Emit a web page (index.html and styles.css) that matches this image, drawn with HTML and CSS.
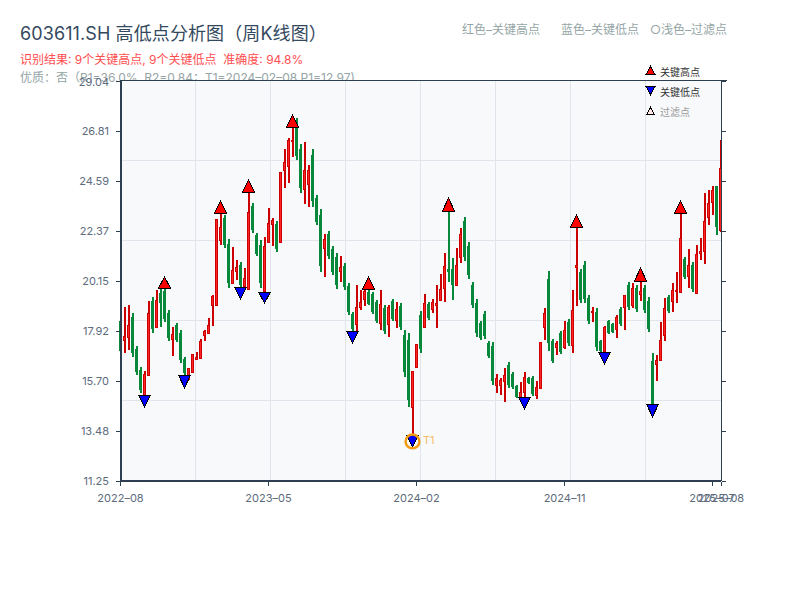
FILE: index.html
```html
<!DOCTYPE html>
<html lang="en">

<head>
    <meta charset="UTF-8">

    <title>603611.SH 高低点分析图</title>
    <link rel="stylesheet" href="styles.css">
</head>

<body>

    <div class="page">
        <div class="header">
            <div class="header-left">
                <h1 class="title">603611.SH 高低点分析图（周K线图）</h1>
                <div class="result">识别结果: 9个关键高点, 9个关键低点&nbsp;&nbsp;准确度: 94.8%</div>
                <div class="quality">优质：否（R1=36.0%, R2=0.84；T1=2024–02–08 P1=12.97)</div>
            </div>
            <div class="header-key">
                <span class="key-first">红色–关键高点</span>
                <span class="key-second">蓝色–关键低点</span>
                <span>○浅色–过滤点</span>
            </div>
        </div>

        <svg class="chart" width="800" height="540" viewBox="0 60 800 540">
            <rect class="plot" x="121" y="81" width="600" height="400"></rect>
            <g id="grid"></g>
            <g id="candles"></g>
            <g id="markers"></g>
            <circle class="t1-ring" cx="412.5" cy="441.4" r="6.9"></circle>
            <text class="t1-label" x="423" y="444">T1</text>
            <g id="axes"></g>

            <g class="y-labels">
                <text x="109" y="86">29.04</text>
                <text x="109" y="135">26.81</text>
                <text x="109" y="185">24.59</text>
                <text x="109" y="235">22.37</text>
                <text x="109" y="285">20.15</text>
                <text x="109" y="335">17.92</text>
                <text x="109" y="385">15.70</text>
                <text x="109" y="435">13.48</text>
                <text x="109" y="485">11.25</text>
            </g>
            <g class="x-labels">
                <text x="120.5" y="502">2022–08</text>
                <text x="268.5" y="502">2023–05</text>
                <text x="416.5" y="502">2024–02</text>
                <text x="564.5" y="502">2024–11</text>
                <text x="712" y="502">2025–07</text>
                <text x="721" y="502">2025–08</text>
            </g>
            <g class="legend">
                <polygon class="up" points="650.5,66.5 655,74.5 646,74.5"></polygon>
                <text x="660" y="76">关键高点</text>
                <polygon class="down" points="650.5,94.5 655,86.5 646,86.5"></polygon>
                <text x="660" y="96">关键低点</text>
                <polygon class="faint" points="650.5,107.5 654,114 647,114"></polygon>
                <text class="legend-muted" x="660" y="116">过滤点</text>
            </g>
        </svg>
    </div>

    <script src="chart.js"></script>

</body>

</html>
```

FILE: styles.css
```css
* {
    margin: 0;
    padding: 0;
}

body {
    background: #fff;
    font-family: Inter, "Noto Sans CJK SC", sans-serif;
}

.page {
    width: 800px;
    height: 600px;
    overflow: hidden;
}

.header {
    display: flex;
    justify-content: space-between;
    height: 60px;
    padding: 21px 73px 0 20px;
    box-sizing: border-box;
}

.title {
    font-size: 18px;
    font-weight: 400;
    line-height: 26px;
    letter-spacing: 0.1px;
    color: #34495e;
}

.result {
    margin-top: 4px;
    font-size: 12px;
    line-height: 18px;
    color: #ff4d4f;
}

.quality {
    font-size: 12px;
    line-height: 17px;
    color: #95a5a6;
    white-space: nowrap;
}

.header-key {
    display: flex;
    font-size: 12px;
    line-height: 17px;
    color: #95a5a6;
}

.key-first {
    margin-right: 21px;
}

.key-second {
    margin-right: 11px;
}

.chart {
    display: block;
    overflow: visible;
    position: relative;
}

.plot {
    fill: #f8f9fb;
}

.grid-line {
    stroke: #e1e4ea;
    stroke-width: 1;
}

.axis-thick {
    stroke: #2c3e50;
    stroke-width: 2;
}

.axis-thin {
    stroke: #2c3e50;
    stroke-width: 1;
}

.wick-up {
    fill: #cc0000;
}

.wick-down {
    fill: #08883a;
}

.body-up {
    fill: #ff2424;
    stroke: #cc0000;
    stroke-width: 1;
}

.body-down {
    fill: #08883a;
}

.up {
    fill: #ff0000;
    stroke: #000;
    stroke-width: 1;
    shape-rendering: crispEdges;
}

.down {
    fill: #0000ff;
    stroke: #000;
    stroke-width: 1;
    shape-rendering: crispEdges;
}

.faint {
    fill: #ffe6e6;
    stroke: #000;
    stroke-width: 1;
    shape-rendering: crispEdges;
}

.t1-ring {
    fill: none;
    stroke: #f39c12;
    stroke-width: 2.5;
}

.t1-label {
    font-size: 11px;
    fill: #f7be6a;
}

.y-labels text {
    font-size: 11px;
    fill: #5d6b7c;
    text-anchor: end;
}

.x-labels text {
    font-size: 11px;
    fill: #5d6b7c;
    text-anchor: middle;
}

.legend text {
    font-size: 10px;
    fill: #333;
}

.legend .legend-muted {
    fill: #999;
}
```

FILE: chart.js
```js
const NS = 'http://www.w3.org/2000/svg';

// weekly bars, one every 4px from x=120: [colour, high, low, bodyTop, bodyBottom]
const bars = [
    ['g',317,355], ['r',307,353,336,341], ['r',305,350,325,338], ['g',313,357], ['g',346,375], ['g',367,393],
    ['r',371,396,374,396], ['r',301,376,313,376], ['g',297,333], ['r',290,328,300,328], ['g',287,327,293,303], ['g',288,322],
    ['g',310,341], ['r',327,356,334,340], ['g',323,342], ['g',330,363], ['g',357,375], ['r',368,380,368,380],
    ['r',354,373,354,373], ['r',352,360,357,360], ['r',339,359,341,359], ['r',330,341,331,336], ['r',318,334,325,334], ['r',295,326,296,306],
    ['r',219,306,219,306], ['r',213,245,227,241], ['g',215,248], ['g',239,288], ['r',247,284,270,284], ['r',260,280,267,272],
    ['g',262,287], ['r',268,287,278,287], ['r',193,290,212,290], ['g',203,233], ['g',233,256], ['g',240,288],
    ['r',237,292,246,292], ['r',208,243,223,243], ['r',218,246,220,225], ['g',221,252], ['r',172,243,172,243], ['r',149,188,162,171],
    ['r',138,183,140,167], ['r',127,157,140,142], ['g',118,160], ['g',144,193], ['r',142,204,170,190], ['r',165,207,170,185],
    ['g',149,207], ['g',195,225], ['g',209,272], ['r',234,277,239,249], ['g',231,259], ['g',246,275],
    ['g',253,289], ['r',256,282,267,272], ['g',263,290], ['g',283,315], ['g',312,331], ['r',285,332,307,325],
    ['r',290,310,302,308], ['r',290,306,291,300], ['g',290,305], ['g',292,314], ['g',300,323], ['r',290,330,304,324],
    ['g',305,334], ['r',305,337,307,325], ['g',299,321], ['r',302,328,309,321], ['g',303,330], ['g',330,377],
    ['g',333,407], ['r',371,437,371,408], ['r',344,368,344,368], ['g',311,353], ['r',294,328,303,328], ['g',302,320],
    ['r',299,313,302,310], ['r',285,328,303,306], ['r',274,301,289,301], ['r',253,302,266,289], ['g',210,282,269,272], ['g',258,300,269,285],
    ['r',248,286,265,286], ['r',228,263,234,258], ['g',217,261], ['g',242,279], ['g',282,308], ['g',299,337],
    ['g',321,340], ['g',311,339], ['g',341,358], ['g',342,385], ['r',374,393,378,386], ['r',378,395,380,386],
    ['r',368,402,375,382], ['g',362,388], ['g',372,389], ['g',385,398], ['r',382,398,392,398], ['r',372,397,377,393],
    ['g',377,384], ['g',376,396], ['r',381,399,387,396], ['r',342,389,342,389], ['r',308,340,313,328], ['g',271,351],
    ['g',339,363], ['r',341,355,343,348], ['g',331,354], ['r',321,349,330,348], ['g',319,346], ['r',290,353,310,346],
    ['r',228,306,265,268], ['g',269,303], ['g',261,303], ['g',295,324], ['r',307,322,311,312], ['g',308,351],
    ['g',340,352], ['r',326,352,327,352], ['g',320,334], ['g',323,333], ['r',315,338,317,330], ['g',307,326],
    ['r',295,330,295,308], ['g',282,310], ['r',283,308,288,306], ['g',285,312], ['r',280,301,291,295], ['g',285,313],
    ['g',297,332], ['g',353,405,361,405], ['r',355,381,360,365], ['r',322,361,340,361], ['r',298,341,308,336], ['g',295,313],
    ['r',283,312,290,302], ['r',272,303,290,292], ['r',213,293,238,293], ['g',257,279], ['r',249,288,265,277], ['g',262,292],
    ['r',245,294,254,294], ['r',238,260,251,254], ['r',193,264,221,252], ['r',190,225,203,218], ['r',186,215,190,203], ['g',186,235,186,227],
    ['r',140,232,168,231]
];

const ups = [[164,277,288], [220,201,213], [248,180,192], [292,115,127], [368,277,289], [448,198,211], [576,215,227], [640,268,281], [680,201,213]];
const downs = [[144,395,407], [184,375,388], [240,287,299], [264,292,303], [352,331,343], [412,435,447], [524,397,409], [604,352,364], [652,404,417]];

function add(parent, tag, attrs) {
    const node = document.createElementNS(NS, tag);
    Object.keys(attrs).forEach((key) => node.setAttribute(key, attrs[key]));
    document.getElementById(parent).appendChild(node);
}

function line(parent, cls, x1, y1, x2, y2) {
    add(parent, 'line', { class: cls, x1: x1, y1: y1, x2: x2, y2: y2, 'shape-rendering': 'crispEdges' });
}

[195, 270, 345, 420, 495, 570, 645].forEach((x) => line('grid', 'grid-line', x + 0.5, 81, x + 0.5, 480));
[160, 240, 320, 400].forEach((y) => line('grid', 'grid-line', 122, y + 0.5, 721, y + 0.5));

bars.forEach((bar, i) => {
    const x = 120 + i * 4;
    const kind = bar[0] === 'r' ? 'up' : 'down';
    const span = bar[2] - bar[1];
    const top = bar[3] === undefined ? bar[1] + span * 0.1 : bar[3];
    const bottom = bar[4] === undefined ? bar[2] - span * 0.1 : bar[4];
    add('candles', 'rect', { class: 'wick-' + kind, x: x, y: bar[1], width: 2, height: span, 'shape-rendering': 'crispEdges' });
    if (kind === 'up') {
        add('candles', 'rect', { class: 'body-up', x: x - 0.5, y: top + 0.5, width: 2, height: Math.max(bottom - top - 1, 1), 'shape-rendering': 'crispEdges' });
    } else {
        add('candles', 'rect', { class: 'body-down', x: x - 1, y: top, width: 3, height: bottom - top, 'shape-rendering': 'crispEdges' });
    }
});

ups.forEach((m) => {
    const x = m[0] + 0.5;
    add('markers', 'polygon', { class: 'up', points: `${x},${m[1]} ${x + 6},${m[2]} ${x - 6},${m[2]}` });
});
downs.forEach((m) => {
    const x = m[0] + 0.5;
    add('markers', 'polygon', { class: 'down', points: `${x},${m[2]} ${x + 6},${m[1]} ${x - 6},${m[1]}` });
});

line('axes', 'axis-thick', 121, 81, 121, 482);
line('axes', 'axis-thick', 120, 481, 721, 481);
line('axes', 'axis-thin', 120, 80.5, 727, 80.5);
line('axes', 'axis-thin', 721.5, 81, 721.5, 481);

[81, 131, 181, 231, 281, 331, 381, 431, 481].forEach((y) => {
    line('axes', 'axis-thin', 116, y + 0.5, 120, y + 0.5);
    line('axes', 'axis-thin', 722, y + 0.5, 726, y + 0.5);
});
[120.5, 268.5, 416.5, 564.5, 712.5, 721.5].forEach((x) => line('axes', 'axis-thin', x, 482, x, 486));
```
